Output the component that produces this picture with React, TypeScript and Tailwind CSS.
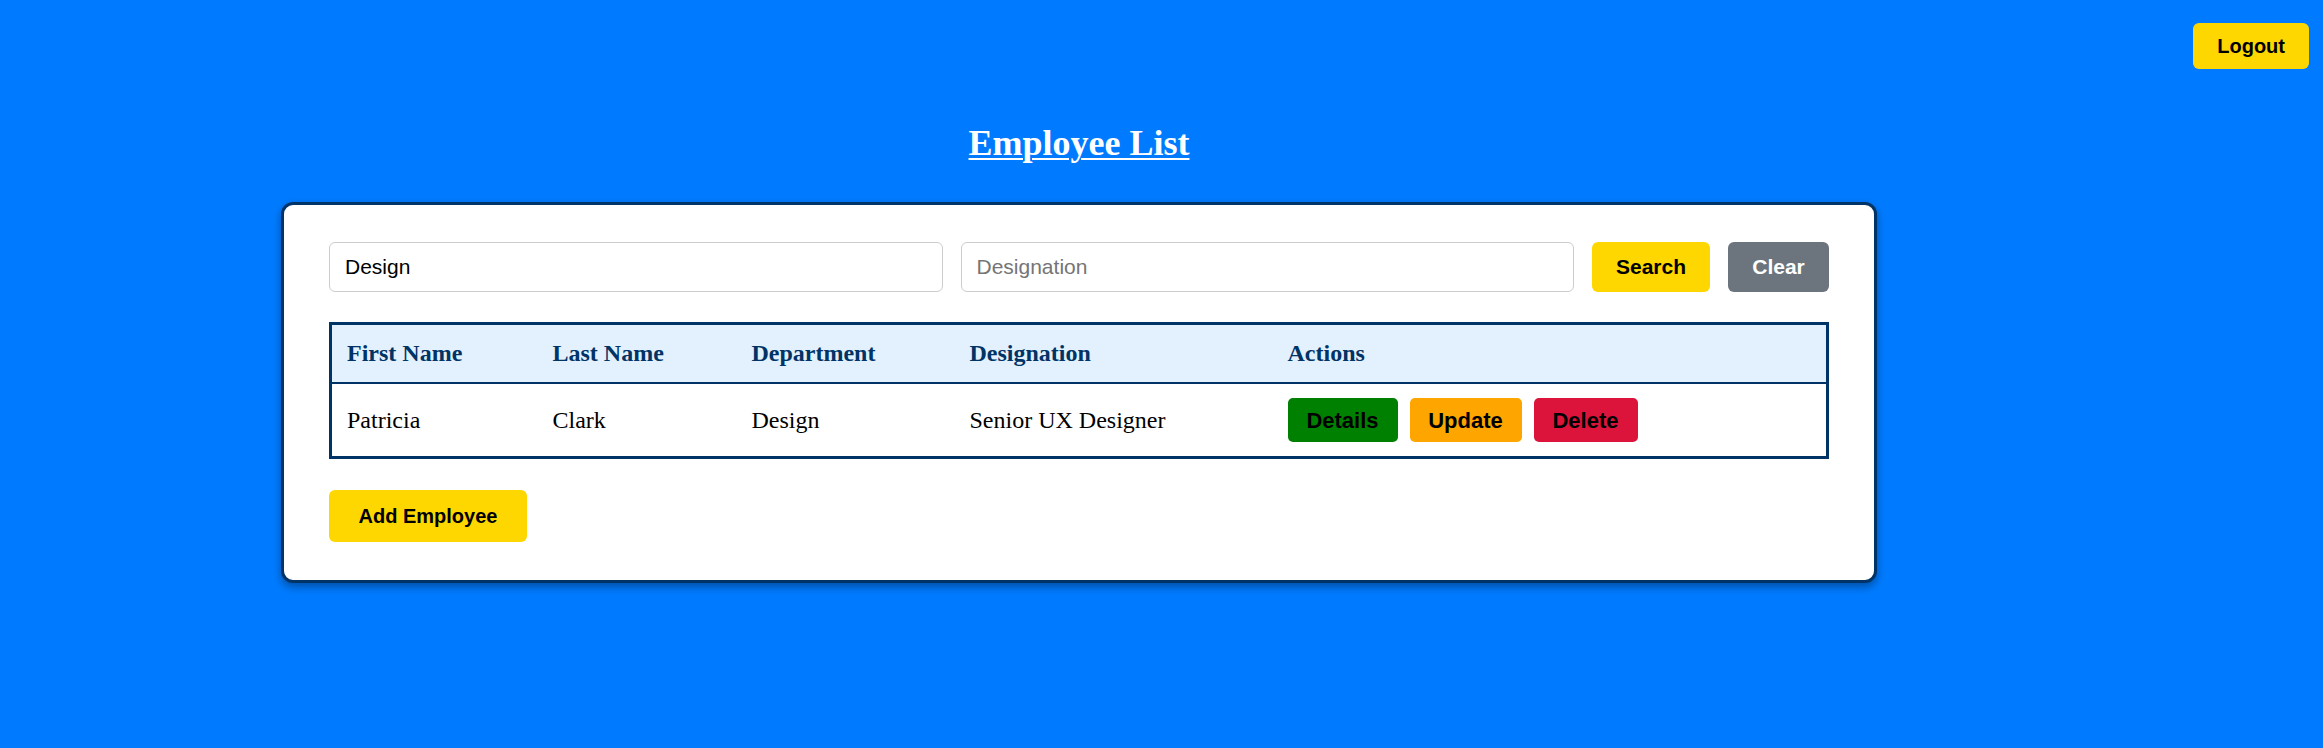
import { useState } from 'react'

type Employee = {
  id: number
  firstName: string
  lastName: string
  department: string
  designation: string
}

const employees: Employee[] = [
  { id: 1, firstName: 'Patricia', lastName: 'Clark', department: 'Design', designation: 'Senior UX Designer' },
]

export default function App() {
  const [department, setDepartment] = useState('Design')
  const [designation, setDesignation] = useState('')

  return (
    <div className="min-h-[748px] w-full bg-[#007bff] font-['Liberation_Sans',Arial,sans-serif]">
      {/* top bar */}
      <div className="flex justify-end pt-[23px] pr-[14px]">
        <button className="h-[46px] px-[24px] rounded-[6px] bg-[#ffd700] text-[20px] font-bold text-black">
          Logout
        </button>
      </div>

      <div className="ml-[281px] w-[1596px]">
        <h1 className="mt-[54px] text-center font-['Liberation_Serif','Times_New_Roman',serif] text-[36px] leading-[40px] font-bold text-white underline decoration-2 underline-offset-[3px]">
          Employee List
        </h1>

        {/* card */}
        <div className="mt-[39px] bg-white border-[3px] border-[#003366] rounded-[12px] shadow-[0_4px_8px_rgba(0,0,0,0.35)] px-[45px] pt-[37px] pb-[38px]">
          {/* search */}
          <div className="flex items-center gap-[18px]">
            <input
              value={department}
              onChange={(e) => setDepartment(e.target.value)}
              placeholder="Department"
              className="flex-1 min-w-0 h-[50px] px-[15px] border border-[#cccccc] rounded-[6px] text-[21px] text-black placeholder:text-[#757575] outline-none"
            />
            <input
              value={designation}
              onChange={(e) => setDesignation(e.target.value)}
              placeholder="Designation"
              className="flex-1 min-w-0 h-[50px] px-[15px] border border-[#cccccc] rounded-[6px] text-[21px] text-black placeholder:text-[#757575] outline-none"
            />
            <button className="h-[50px] w-[118px] rounded-[6px] bg-[#ffd700] text-[21px] font-bold text-black">
              Search
            </button>
            <button className="h-[50px] w-[101px] rounded-[6px] bg-[#6c757d] text-[21px] font-bold text-white">
              Clear
            </button>
          </div>

          {/* table */}
          <table className="mt-[30px] w-full border-collapse border-[3px] border-[#003366] font-['Liberation_Serif','Times_New_Roman',serif] text-[24px]">
            <thead>
              <tr className="bg-[#e3f0fd] border-b-2 border-[#003366] text-left text-[#003366]">
                <th className="w-[207px] px-[15px] py-[15px] font-bold leading-[27px]">First Name</th>
                <th className="w-[199px] px-[15px] py-[15px] font-bold leading-[27px]">Last Name</th>
                <th className="w-[218px] px-[15px] py-[15px] font-bold leading-[27px]">Department</th>
                <th className="w-[318px] px-[15px] py-[15px] font-bold leading-[27px]">Designation</th>
                <th className="px-[15px] py-[15px] font-bold leading-[27px]">Actions</th>
              </tr>
            </thead>
            <tbody>
              {employees.map((emp) => (
                <tr key={emp.id} className="text-black">
                  <td className="px-[15px] py-[14px] align-middle">{emp.firstName}</td>
                  <td className="px-[15px] py-[14px] align-middle">{emp.lastName}</td>
                  <td className="px-[15px] py-[14px] align-middle">{emp.department}</td>
                  <td className="px-[15px] py-[14px] align-middle">{emp.designation}</td>
                  <td className="px-[15px] py-[14px] align-middle">
                    <div className="flex gap-[12px] font-['Liberation_Sans',Arial,sans-serif]">
                      <button className="h-[44px] w-[110px] rounded-[5px] bg-[#008000] text-[22px] font-bold text-black">
                        Details
                      </button>
                      <button className="h-[44px] w-[112px] rounded-[5px] bg-[#ffa500] text-[22px] font-bold text-black">
                        Update
                      </button>
                      <button className="h-[44px] w-[104px] rounded-[5px] bg-[#dc143c] text-[22px] font-bold text-black">
                        Delete
                      </button>
                    </div>
                  </td>
                </tr>
              ))}
            </tbody>
          </table>

          <button className="mt-[31px] h-[52px] w-[198px] rounded-[6px] bg-[#ffd700] text-[20px] font-bold text-black">
            Add Employee
          </button>
        </div>
      </div>
    </div>
  )
}
